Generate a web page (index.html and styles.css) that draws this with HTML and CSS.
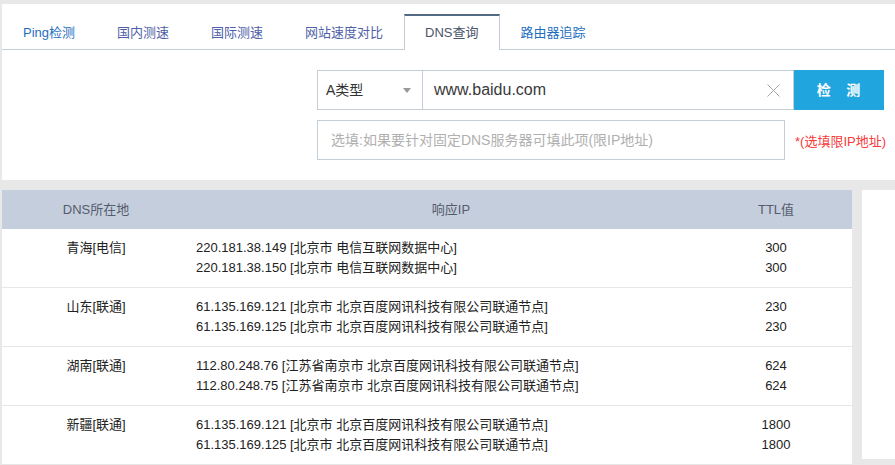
FILE: index.html
```html
<!DOCTYPE html>
<html lang="zh-CN">
<head>
<meta charset="utf-8">
<title>DNS查询</title>
<link rel="stylesheet" href="styles.css">
</head>
<body>
<div class="panel">
  <div class="tabs">
    <div class="tab blue">Ping检测</div>
    <div class="tab visited">国内测速</div>
    <div class="tab visited">国际测速</div>
    <div class="tab visited">网站速度对比</div>
    <div class="tab active">DNS查询</div>
    <div class="tab blue">路由器追踪</div>
  </div>
  <div class="form">
    <div class="row">
      <div class="select">A类型<span class="caret"></span></div>
      <div class="input">www.baidu.com
        <svg class="clear" width="13" height="13" viewBox="0 0 13 13"><path d="M0.5 0.5L12.5 12.5M12.5 0.5L0.5 12.5" stroke="#a8a8a8" stroke-width="1" fill="none"/></svg>
      </div>
      <div class="btn">检&nbsp;&nbsp;&nbsp;测</div>
    </div>
    <div class="row row2">
      <div class="input2">选填:如果要针对固定DNS服务器可填此项(限IP地址)</div>
      <div class="note">*(选填限IP地址)</div>
    </div>
  </div>
</div>
<div class="results">
  <div class="table">
    <div class="thead">
      <div class="c1">DNS所在地</div>
      <div class="c2 h2">响应IP</div>
      <div class="c3">TTL值</div>
    </div>
    <div class="tr">
      <div class="c1">青海[电信]</div>
      <div class="c2">220.181.38.149 [北京市 电信互联网数据中心]<br>220.181.38.150 [北京市 电信互联网数据中心]</div>
      <div class="c3">300<br>300</div>
    </div>
    <div class="tr">
      <div class="c1">山东[联通]</div>
      <div class="c2">61.135.169.121 [北京市 北京百度网讯科技有限公司联通节点]<br>61.135.169.125 [北京市 北京百度网讯科技有限公司联通节点]</div>
      <div class="c3">230<br>230</div>
    </div>
    <div class="tr">
      <div class="c1">湖南[联通]</div>
      <div class="c2">112.80.248.76 [江苏省南京市 北京百度网讯科技有限公司联通节点]<br>112.80.248.75 [江苏省南京市 北京百度网讯科技有限公司联通节点]</div>
      <div class="c3">624<br>624</div>
    </div>
    <div class="tr">
      <div class="c1">新疆[联通]</div>
      <div class="c2">61.135.169.121 [北京市 北京百度网讯科技有限公司联通节点]<br>61.135.169.125 [北京市 北京百度网讯科技有限公司联通节点]</div>
      <div class="c3">1800<br>1800</div>
    </div>
  </div>
  <div class="side"></div>
</div>
</body>
</html>
```
FILE: styles.css
```css
html, body {
  margin: 0;
  padding: 0;
  background: #e8e8e8;
  height: 100%;
  overflow: hidden;
}
body {
  padding: 4px 0 0 2px;
  font-family: "Liberation Sans", "Noto Sans CJK SC", sans-serif;
  font-size: 13px;
  color: #333;
}
.panel {
  background: #fff;
  height: 176px;
  box-sizing: border-box;
}
.tabs {
  display: flex;
  padding-top: 10px;
  border-bottom: 1px solid #c5cdd9;
  height: 35px;
}
.tab {
  box-sizing: border-box;
  height: 36px;
  padding: 0 20px;
  border: 1px solid transparent;
  border-top-width: 2px;
  border-bottom: 0;
  line-height: 33px;
  font-size: 13px;
  margin-bottom: -1px;
}
.tab.blue { color: #1f6fbf; }
.tab.visited { color: #4f5fa8; }
.tab.active {
  color: #4b556a;
  border-color: #c5cdd9;
  border-top-color: #536a85;
  background: #fff;
}
.form {
  padding: 20px 0 0 315px;
}
.row {
  display: flex;
  align-items: center;
}
.row2 { margin-top: 10px; }
.select {
  box-sizing: border-box;
  width: 106px;
  height: 40px;
  border: 1px solid #c5cdd9;
  padding-left: 8px;
  line-height: 38px;
  font-size: 14px;
  color: #333;
  position: relative;
}
.caret {
  position: absolute;
  left: 85px;
  top: 17px;
  width: 0;
  height: 0;
  border-left: 4px solid transparent;
  border-right: 4px solid transparent;
  border-top: 5px solid #999;
}
.input {
  box-sizing: border-box;
  width: 371px;
  height: 40px;
  border: 1px solid #c5cdd9;
  border-left: 0;
  padding-left: 11px;
  line-height: 38px;
  font-size: 16px;
  color: #3a3a3a;
  display: flex;
  align-items: center;
}
.clear {
  margin-left: auto;
  margin-right: 13px;
}
.btn {
  width: 90px;
  height: 40px;
  background: #21a5df;
  color: #fff;
  font-size: 14px;
  font-weight: bold;
  line-height: 40px;
  text-align: center;
  letter-spacing: 1px;
}
.input2 {
  box-sizing: border-box;
  width: 468px;
  height: 40px;
  border: 1px solid #c5cdd9;
  padding-left: 13px;
  line-height: 38px;
  font-size: 14px;
  color: #b0b0b0;
}
.note {
  margin-left: 10px;
  color: #f53a3a;
  font-size: 13px;
}
.results {
  display: flex;
  margin-top: 10px;
  gap: 10px;
}
.table {
  width: 850px;
  background: #fff;
}
.thead, .tr {
  display: grid;
  grid-template-columns: 188px 510px 152px;
}
.thead {
  background: #c5cedc;
  height: 39px;
  line-height: 39px;
  color: #555c6e;
  font-size: 13px;
}
.thead .c2 { text-align: center; padding-left: 12px; }
.tr {
  height: 59px;
  box-sizing: border-box;
  padding-top: 9px;
  line-height: 20px;
  border-bottom: 1px solid #e6e6e6;
  color: #222;
}
.c1, .c3 { text-align: center; }
.tr .c2 { padding-left: 6px; }
.side {
  flex: 1;
  background: #fff;
  height: 269px;
}
```
